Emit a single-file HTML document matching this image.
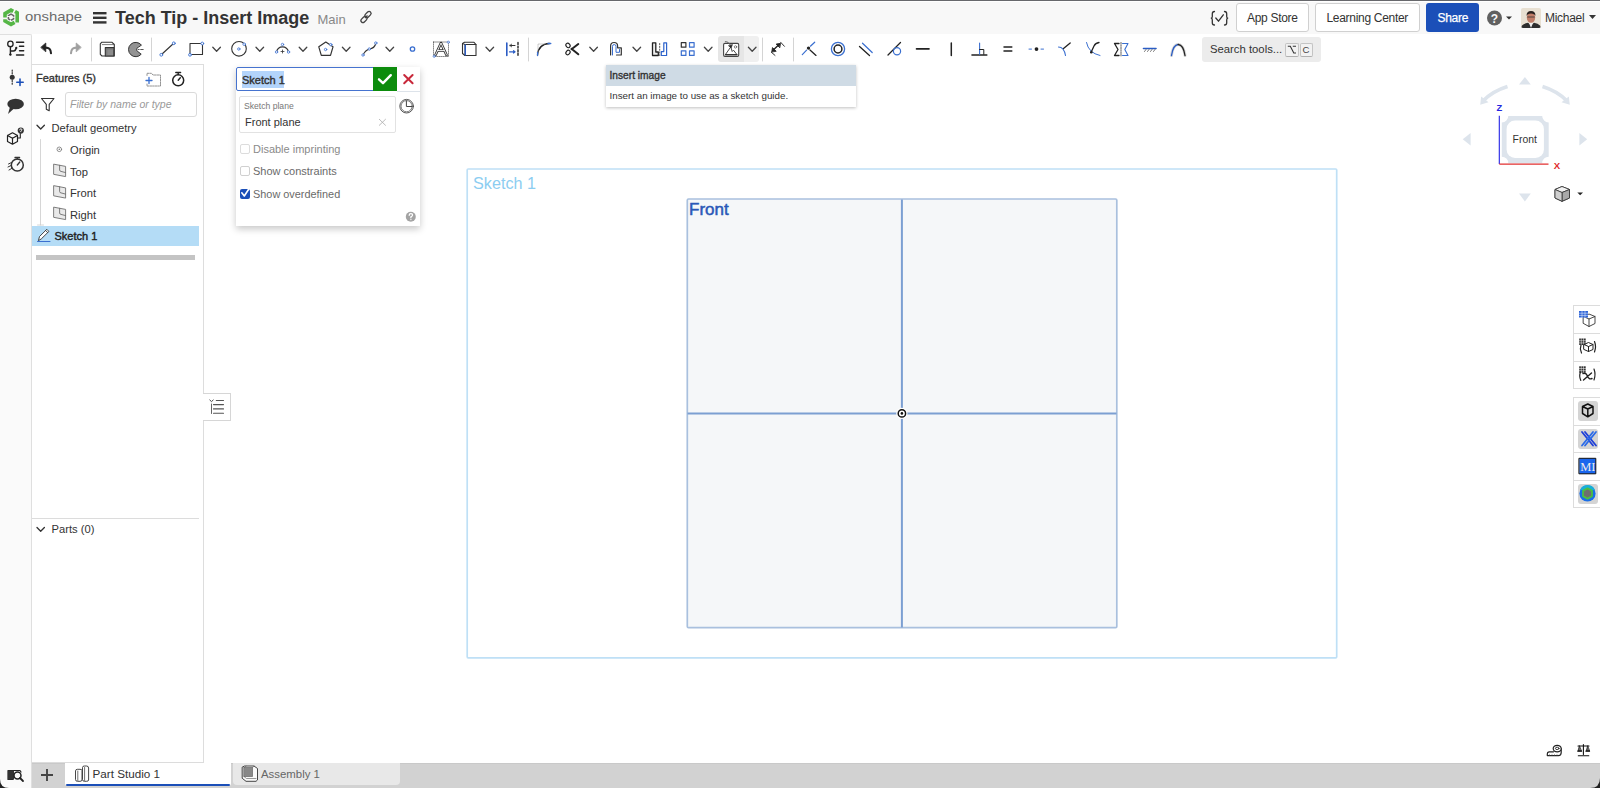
<!DOCTYPE html>
<html><head><meta charset="utf-8">
<style>
*{box-sizing:border-box;margin:0;padding:0}
html,body{width:1600px;height:788px;overflow:hidden;background:#fff;font-family:"Liberation Sans",sans-serif;color:#333}
.a{position:absolute}
svg{position:absolute;overflow:visible}
.t{position:absolute;white-space:nowrap;line-height:1}
</style></head><body>
<div class="a" style="left:0;top:0;width:1600px;height:1px;background:#67686c"></div>
<div class="a" style="left:0;top:1px;width:1600px;height:33px;background:#f8f8f8;border-top:1px solid #fff"></div>
<div class="a" style="left:32px;top:34px;width:1568px;height:30px;background:#fff"></div>
<div class="a" style="left:-1px;top:34px;width:33px;height:754px;background:#fafafa;border-right:1px solid #dfdfdf;border-top:1px solid #dfdfdf;border-top-right-radius:2px"></div>
<div class="a" style="left:32px;top:64px;width:172px;height:698px;background:#fff;border-top:1px solid #ddd;border-right:1px solid #ddd"></div>
<div class="a" style="left:32px;top:763px;width:1568px;height:25px;background:#d2d2d2;border-top:1px solid #c9c9c9"></div>
<!-- HEADER CONTENT -->
<svg style="left:0;top:0" width="30" height="34" viewBox="0 0 30 34" fill="none" stroke-linejoin="miter">
  <path d="M5 17.5 V13.6 L11 10.1 L13.2 11.3" stroke="#55b646" stroke-width="3.6"/>
  <path d="M15 11.5 L17.2 12.8 V22.6" stroke="#55b646" stroke-width="3.6"/>
  <path d="M5 19.2 V21 L11 24.4 L14.6 22.4" stroke="#55b646" stroke-width="3.6"/>
  <path d="M11 14.2 L13.6 15.7 V18.8 L11 20.3 L8.4 18.8 V15.7 Z" stroke="#666" stroke-width="1.5" stroke-dasharray="4 1"/>
</svg>
<div class="t" style="left:25px;top:11.4px;font-size:12.6px;color:#6a6a6a;transform:scaleX(1.18);transform-origin:0 0">onshape</div>
<svg style="left:93px;top:12px" width="14" height="12" viewBox="0 0 14 12">
  <rect x="0" y="0" width="13.5" height="2.4" fill="#333"/>
  <rect x="0" y="4.6" width="13.5" height="2.4" fill="#333"/>
  <rect x="0" y="9.2" width="13.5" height="2.4" fill="#333"/>
</svg>
<div class="t" style="left:115px;top:9px;font-size:18px;font-weight:bold;color:#333;letter-spacing:0px">Tech Tip - Insert Image</div>
<div class="t" style="left:317.5px;top:13px;font-size:13px;color:#888">Main</div>
<svg style="left:359px;top:10px" width="14" height="14" viewBox="0 0 14 14">
  <path d="M6 8 L8.5 5.5" stroke="#444" stroke-width="1.3"/>
  <rect x="7" y="1" width="4" height="7" rx="2" transform="rotate(45 9 4.5)" fill="none" stroke="#444" stroke-width="1.3"/>
  <rect x="3" y="6" width="4" height="7" rx="2" transform="rotate(45 5 9.5)" fill="none" stroke="#444" stroke-width="1.3"/>
</svg>

<!-- right header -->
<svg style="left:0;top:0" width="1240" height="34" viewBox="0 0 1240 34" fill="none" stroke-linecap="round" stroke-linejoin="round">
 <path d="M1214.5 11.5 Q1212.3 11.5 1212.3 13.8 V16.5 Q1212.3 18 1211.3 18.2 Q1212.3 18.5 1212.3 20 V22.7 Q1212.3 25 1214.5 25" stroke="#333" stroke-width="1.3"/>
 <path d="M1224.5 11.5 Q1226.7 11.5 1226.7 13.8 V16.5 Q1226.7 18 1227.7 18.2 Q1226.7 18.5 1226.7 20 V22.7 Q1226.7 25 1224.5 25" stroke="#333" stroke-width="1.3"/>
 <path d="M1215.8 18 L1218.5 21.2 L1223.3 14.8" stroke="#333" stroke-width="1.3"/>
</svg>
<div class="a" style="left:1236px;top:3px;width:73px;height:29px;border:1px solid #d0d0d0;border-radius:3px;background:#fff"></div>
<div class="t" style="left:1247px;top:11.6px;font-size:12px;letter-spacing:-0.3px;color:#333">App Store</div>
<div class="a" style="left:1315px;top:3px;width:105px;height:29px;border:1px solid #d0d0d0;border-radius:3px;background:#fff"></div>
<div class="t" style="left:1326.5px;top:11.6px;font-size:12px;letter-spacing:-0.3px;color:#333">Learning Center</div>
<div class="a" style="left:1426px;top:3px;width:53px;height:29px;border-radius:3px;background:#1b4fb8"></div>
<div class="t" style="left:1437.5px;top:11.6px;font-size:12px;letter-spacing:-0.3px;-webkit-text-stroke:0.25px #fff;color:#fff">Share</div>
<svg style="left:1487px;top:10px" width="26" height="16" viewBox="0 0 26 16">
  <circle cx="7.5" cy="8" r="7.5" fill="#606060"/>
  <text x="7.5" y="12.5" text-anchor="middle" font-family="Liberation Sans" font-weight="bold" font-size="12" fill="#f8f8f8">?</text>
  <path d="M19 6.5 L25 6.5 L22 9.5 Z" fill="#333"/>
</svg>
<svg style="left:1521px;top:8px" width="20" height="20" viewBox="0 0 20 20">
 <defs><clipPath id="av"><rect x="0" y="0" width="20" height="20" rx="2"/></clipPath></defs>
 <g clip-path="url(#av)">
  <rect width="20" height="20" fill="#e8e0d2"/>
  <path d="M0 20 L1 17.5 Q3 15.5 7 14.8 L10 17 L13 14.8 Q17 15.5 19 17.5 L20 20 Z" fill="#2e2e2e"/>
  <path d="M8 15 L10 20 L12 15 Z" fill="#eee"/>
  <ellipse cx="10" cy="9.5" rx="4.2" ry="5.3" fill="#c07d68"/>
  <path d="M5.5 8 Q5.5 3 10 3 Q14.5 3 14.5 8 Q13.5 5.5 10 5.5 Q6.5 5.5 5.5 8 Z" fill="#2a2220"/>
  <path d="M6.3 9 H13.7" stroke="#333" stroke-width="0.8"/>
 </g>
</svg>
<div class="t" style="left:1545px;top:11.6px;font-size:12px;letter-spacing:-0.3px;color:#333">Michael</div>
<svg style="left:1589px;top:15px" width="7" height="4" viewBox="0 0 7 4"><path d="M0 0 L7 0 L3.5 4 Z" fill="#333"/></svg>

<!-- TOOLBAR -->
<div class="a" style="left:718px;top:36px;width:25.7px;height:26px;background:#e6e6e6;border-radius:3px 0 0 3px"></div>
<div class="a" style="left:743.7px;top:36px;width:15.5px;height:26px;background:#f0f0f0;border-radius:0 3px 3px 0"></div>
<svg style="left:0;top:0" width="1600" height="64" viewBox="0 0 1600 64" fill="none" stroke-linecap="round" stroke-linejoin="round">
 <g stroke="#d4d4d4" stroke-width="1">
  <path d="M91.5 38 V61 M151.5 38 V61 M528.5 38 V61 M762.5 38 V61 M793.5 38 V61"/>
 </g>
 <!-- undo -->
 <path d="M41 47.2 L45.8 43 V51.4 Z" fill="#222" stroke="#222" stroke-width="0.8"/><path d="M45 47.6 Q50.8 47.2 51 53.3" stroke="#222" stroke-width="2.1"/>
 <!-- redo -->
 <path d="M81 47.2 L76.2 43 V51.4 Z" fill="#a0a0a0" stroke="#a0a0a0" stroke-width="0.8"/><path d="M77 47.6 Q71.2 47.2 71 53.3" stroke="#a0a0a0" stroke-width="2.1"/>
 <!-- layers (new sketch) -->
 <path d="M100.3 43.8 L101.8 42.2 H111.8 L114.3 44.5 V56 H102 L100.3 54.3 Z" fill="#fff" stroke="#333" stroke-width="1.1"/>
 <path d="M102.3 44.6 H113.5" stroke="#444" stroke-width="0.7"/>
 <path d="M105.3 47.6 H113.8 V56 H105.3 Z" fill="#8c8c8c" stroke="#333" stroke-width="1.1"/>
 <path d="M106.8 49 H113.8 M106.8 49 V56" stroke="#666" stroke-width="0.6"/>
 <!-- use -->
 <path d="M141.2 44.8 A7.2 7.2 0 1 0 141.2 54.2 L137.8 51.5 A2.2 2.2 0 0 1 137.8 47.5 Z" fill="#939393" stroke="#333" stroke-width="1"/>
 <path d="M138 49.5 H139.2 M140.7 49.5 H143.2" stroke="#444" stroke-width="0.9"/>
 <!-- line -->
 <path d="M161.5 54.5 L173.5 43.5" stroke="#333" stroke-width="1.1"/>
 <circle cx="161.3" cy="54.8" r="1.4" stroke="#3a6fd0" stroke-width="0.9" fill="#fff"/>
 <circle cx="173.8" cy="43.3" r="1.4" stroke="#3a6fd0" stroke-width="0.9" fill="#fff"/>
 <!-- rect -->
 <rect x="190" y="43.5" width="12.5" height="11" stroke="#333" stroke-width="1.1"/>
 <circle cx="202.3" cy="43.5" r="1.4" stroke="#3a6fd0" stroke-width="0.9" fill="#fff"/>
 <circle cx="190" cy="54.8" r="1.4" stroke="#3a6fd0" stroke-width="0.9" fill="#fff"/>
 <!-- carets -->
 <g stroke="#444" stroke-width="1.3">
  <path d="M212.8 47.3 L216.6 51.2 L220.4 47.3"/>
  <path d="M256 47.3 L259.8 51.2 L263.6 47.3"/>
  <path d="M299.2 47.3 L303 51.2 L306.8 47.3"/>
  <path d="M342.4 47.3 L346.2 51.2 L350 47.3"/>
  <path d="M386 47.3 L389.8 51.2 L393.6 47.3"/>
  <path d="M486 47.3 L489.8 51.2 L493.6 47.3"/>
  <path d="M589.8 47.3 L593.6 51.2 L597.4 47.3"/>
  <path d="M633 47.3 L636.8 51.2 L640.6 47.3"/>
  <path d="M704.4 47.3 L708.2 51.2 L712 47.3"/>
  <path d="M748.4 47.3 L752.2 51.2 L756 47.3"/>
 </g>
 <!-- circle -->
 <circle cx="239" cy="48.8" r="7.3" stroke="#333" stroke-width="1.1"/>
 <circle cx="238.8" cy="49" r="1.2" stroke="#3a6fd0" stroke-width="0.8"/>
 <circle cx="244.2" cy="44.2" r="1.3" stroke="#3a6fd0" stroke-width="0.8" fill="#fff"/>
 <!-- arc -->
 <path d="M276.5 52 A6.2 6.8 0 0 1 288.5 52" stroke="#333" stroke-width="1.1"/>
 <circle cx="282.5" cy="44.5" r="1.2" stroke="#3a6fd0" stroke-width="0.8" fill="#fff"/>
 <circle cx="276.5" cy="52" r="1.2" stroke="#3a6fd0" stroke-width="0.8" fill="#fff"/>
 <circle cx="288.5" cy="52" r="1.2" stroke="#3a6fd0" stroke-width="0.8" fill="#fff"/>
 <path d="M281 51.5 H284 M282.5 50 V53" stroke="#333" stroke-width="0.8"/>
 <!-- polygon -->
 <path d="M325.8 42 L333 46.8 L330.5 55.3 L321.3 55.3 L318.8 46.8 Z" stroke="#333" stroke-width="1.2"/>
 <circle cx="325.6" cy="49.5" r="1.2" stroke="#3a6fd0" stroke-width="0.8"/>
 <circle cx="330.8" cy="44.6" r="1.2" stroke="#3a6fd0" stroke-width="0.8" fill="#fff"/>
 <!-- spline -->
 <path d="M363 55 Q365 50.5 369.3 49 Q374.5 48.5 375.8 43.5" stroke="#333" stroke-width="1.1"/>
 <circle cx="363" cy="55" r="1.2" stroke="#3a6fd0" stroke-width="0.8" fill="#fff"/>
 <circle cx="369.3" cy="49" r="1.2" stroke="#3a6fd0" stroke-width="0.8" fill="#fff"/>
 <circle cx="375.8" cy="43" r="1.2" stroke="#3a6fd0" stroke-width="0.8" fill="#fff"/>
 <!-- point -->
 <circle cx="412.5" cy="49" r="2.2" stroke="#3a6fd0" stroke-width="1.3"/>
 <!-- text -->
 <rect x="433.5" y="42" width="15" height="14.5" stroke="#555" stroke-width="0.7" stroke-dasharray="1 1"/>
 <path d="M435.5 55 L441 43 L446.5 55 M437.8 50.5 H444.2" stroke="#333" stroke-width="2.6"/>
 <path d="M435.5 55 L441 43 L446.5 55 M437.8 50.5 H444.2" stroke="#fff" stroke-width="0.9"/>
 <circle cx="448.3" cy="42.2" r="1.1" stroke="#3a6fd0" stroke-width="0.7" fill="#fff"/>
 <circle cx="434.2" cy="56.3" r="1.1" stroke="#3a6fd0" stroke-width="0.7" fill="#fff"/>
 <!-- offset -->
 <path d="M462.5 43.5 L464.5 42.3 H474 L476 44.5 V55.5 H465 L462.5 53.5 Z" stroke="#333" stroke-width="1.1" fill="#fff"/>
 <path d="M462.5 43.5 L465 44.5 H476 M465 44.5 V55.5" stroke="#333" stroke-width="1"/>
 <path d="M465.3 45 V55" stroke="#2a5cc4" stroke-width="1.4"/>
 <!-- mirror -->
 <path d="M506.8 43 V55.5" stroke="#2a5cc4" stroke-width="1.6"/>
 <path d="M518 42.5 V56" stroke="#222" stroke-width="1.4" stroke-dasharray="2 1.6"/>
 <path d="M510 45.5 H515 M510 45.5 L511.5 44.3 M510 45.5 L511.5 46.7" stroke="#333" stroke-width="1"/>
 <path d="M509.5 51.8 H515 M515 51.8 L513.5 50.6 M515 51.8 L513.5 53" stroke="#2a5cc4" stroke-width="1.2"/>
 <!-- fillet -->
 <path d="M537.5 55 Q538.5 44 549.5 43.5" stroke="#222" stroke-width="1.3"/>
 <path d="M537.6 52.5 V55.5" stroke="#3a6fd0" stroke-width="1.3"/>
 <path d="M548 43.5 H550.8" stroke="#3a6fd0" stroke-width="1.3"/>
 <path d="M538 51 V44 H545" stroke="#999" stroke-width="0.5" stroke-dasharray="0.8 0.8"/>
 <!-- trim (scissors) -->
 <path d="M571.5 49.2 L578.3 44 M571.5 48.8 L578.3 54.3" stroke="#222" stroke-width="2"/>
 <ellipse cx="568" cy="45.4" rx="1.9" ry="2.4" transform="rotate(-40 568 45.4)" stroke="#222" stroke-width="1.1"/>
 <ellipse cx="568" cy="52.5" rx="1.9" ry="2.4" transform="rotate(40 568 52.5)" stroke="#222" stroke-width="1.1"/>
 <!-- extend icon -->
 <path d="M610.6 55 V46 A3.5 3.5 0 0 1 617.6 46 V47.8 H621.3 V55 H616.5" stroke="#333" stroke-width="1.2"/>
 <path d="M612.5 55 V46.3 A1.75 1.75 0 0 1 616 46.3 V52.3 H619.5 V49.5" stroke="#3a6fd0" stroke-width="1"/>
 <!-- split -->
 <path d="M652.5 55.5 V42.8 H655.8 V52 H658.3 V55.5 Z" stroke="#222" stroke-width="1.3" fill="#eee"/>
 <path d="M663.8 42.8 H666.6 V55.5 H661.3 V51.6 H663.8 Z" stroke="#2d63cc" stroke-width="1.2"/>
 <path d="M659.7 43.5 V55.5" stroke="#444" stroke-width="0.9" stroke-dasharray="1.2 1.6"/>
 <!-- pattern -->
 <rect x="681.3" y="42.6" width="4.6" height="4.6" stroke="#333" stroke-width="1.2"/>
 <rect x="689.5" y="42.6" width="4.6" height="4.6" stroke="#3a6fd0" stroke-width="1.2"/>
 <rect x="681.3" y="50.8" width="4.6" height="4.6" stroke="#3a6fd0" stroke-width="1.2"/>
 <rect x="689.5" y="50.8" width="4.6" height="4.6" stroke="#3a6fd0" stroke-width="1.2"/>
 <!-- insert image -->
 <rect x="723.6" y="43.4" width="15.1" height="13" rx="1.3" stroke="#444" stroke-width="1.1" fill="#fff"/>
 <path d="M725.5 54.4 L730.8 46.9 L732.2 51.5 L733.5 50.2 L736.8 54.4 Z" stroke="#333" stroke-width="0.9"/>
 <path d="M725.5 54.6 H736.9" stroke="#333" stroke-width="1.2"/>
 <circle cx="735.5" cy="46.9" r="1.2" stroke="#555" stroke-width="0.7"/>
 <path d="M725.3 41.6 Q729 41.3 730.6 46" stroke="#666" stroke-width="1"/>
 <path d="M728.8 45.9 L731.1 47.8 L732.3 44.9 Z" fill="#222" stroke="#222" stroke-width="0.7"/>
 <!-- dimension -->
 <path d="M773.8 49.6 L778.3 45.3" stroke="#222" stroke-width="1.4"/>
 <path d="M771.8 51.7 L772.5 47.6 L775.9 51 Z M780.2 43.4 L776.2 44.1 L779.5 47.5 Z" fill="#222" stroke="#222" stroke-width="0.9"/>
 <path d="M780.6 42.2 L784.4 46.3 M771.3 52.2 L775 55.4" stroke="#333" stroke-width="1"/>
 <!-- coincident -->
 <path d="M802.3 54.6 L806.6 50.2 M810.4 46.2 L814.7 42.2" stroke="#3a6fd0" stroke-width="1.2"/>
 <path d="M810 50 L816 55.4" stroke="#222" stroke-width="1.3"/>
 <circle cx="808.5" cy="48.1" r="1.7" fill="#222" stroke="none"/>
 <!-- concentric -->
 <circle cx="838" cy="49" r="6.6" stroke="#3a6fd0" stroke-width="1.3"/>
 <circle cx="838" cy="49" r="3.9" stroke="#222" stroke-width="1.5"/>
 <!-- parallel -->
 <path d="M859.5 46.5 L869.5 55.5" stroke="#222" stroke-width="1.3"/>
 <path d="M862.5 43.2 L872.2 52.5" stroke="#3a6fd0" stroke-width="1.2"/>
 <!-- tangent -->
 <path d="M888 55 L900.5 42.5" stroke="#222" stroke-width="1.3"/>
 <circle cx="897" cy="51.3" r="3.6" stroke="#3a6fd0" stroke-width="1.2"/>
 <!-- horizontal -->
 <path d="M916.5 48.9 H929" stroke="#222" stroke-width="1.6"/>
 <!-- vertical -->
 <path d="M951.3 43 V55.5" stroke="#222" stroke-width="1.5"/>
 <!-- perpendicular -->
 <path d="M972 55 H986.8" stroke="#222" stroke-width="1.6"/>
 <path d="M979.6 43 V54.3" stroke="#3a6fd0" stroke-width="1.1"/>
 <path d="M979.6 49.5 H983.8 V54.3" stroke="#222" stroke-width="1"/>
 <!-- equal -->
 <path d="M1004 47 H1011.8 M1004 51 H1011.8" stroke="#222" stroke-width="1.5"/>
 <!-- midpoint -->
 <path d="M1029 49.1 H1031.5 M1041 49.1 H1043.5" stroke="#3a6fd0" stroke-width="1"/>
 <circle cx="1036.5" cy="49.1" r="1.9" fill="#222" stroke="none"/>
 <!-- normal -->
 <path d="M1058.5 47 Q1064 47 1065.5 55.5" stroke="#3a6fd0" stroke-width="1.1"/>
 <path d="M1063.5 48.5 L1070.2 43" stroke="#222" stroke-width="1.3"/>
 <!-- pierce -->
 <path d="M1086.5 42.5 Q1088.5 53 1100 55.5" stroke="#3a6fd0" stroke-width="1"/>
 <path d="M1091 52.5 L1094 46 Q1095.5 43 1099 42.5" stroke="#222" stroke-width="1.3"/>
 <circle cx="1091.3" cy="52.3" r="1.3" fill="#222" stroke="none"/>
 <!-- symmetric -->
 <path d="M1119 43.5 H1114.5 L1118 49.5 L1114.5 55.5 H1119" stroke="#222" stroke-width="1.3"/>
 <path d="M1122.5 43.5 H1128 L1124.8 49.5 L1128 55.5 H1122.5" stroke="#3a6fd0" stroke-width="1.1"/>
 <path d="M1121 42.5 V56" stroke="#333" stroke-width="0.8" stroke-dasharray="1.4 1"/>
 <!-- fix -->
 <path d="M1143.5 48.5 H1156" stroke="#2a5cc4" stroke-width="1.6"/>
 <path d="M1144.5 51.5 L1146 49.5 M1147.5 51.5 L1149 49.5 M1150.5 51.5 L1152 49.5 M1153.5 51.5 L1155 49.5" stroke="#444" stroke-width="0.7"/>
 <!-- curvature -->
 <path d="M1171.5 55.5 Q1173 45 1178.2 44.5 Q1183.5 45 1185 55.5" stroke="#d8d8d8" stroke-width="3" stroke-dasharray="0.6 0.9"/>
 <path d="M1171.5 55.5 Q1173 45 1178.2 44.5" stroke="#2a5cc4" stroke-width="1.3"/>
 <path d="M1178.2 44.5 Q1183.5 45 1185 55.5" stroke="#222" stroke-width="1.3"/>
</svg>
<!-- search tools -->
<div class="a" style="left:1201.5px;top:37px;width:119.5px;height:25px;background:#ececec;border-radius:3px"></div>
<div class="t" style="left:1210px;top:44px;font-size:11.3px;color:#333">Search tools...</div>
<div class="a" style="left:1285px;top:42.5px;width:13.5px;height:14px;border:1px solid #c4c4c4;border-bottom:1.5px solid #b0b0b0;border-radius:2px;background:#f2f2f2"></div>
<div class="a" style="left:1299.5px;top:42.5px;width:13.5px;height:14px;border:1px solid #c4c4c4;border-bottom:1.5px solid #b0b0b0;border-radius:2px;background:#f2f2f2"></div>
<svg style="left:0;top:0" width="1320" height="64" viewBox="0 0 1320 64" fill="none">
 <path d="M1287.8 46.3 H1290.3 L1293.8 53 H1296 M1292.8 46.3 H1296" stroke="#333" stroke-width="1.1"/>
</svg>
<div class="t" style="left:1302.6px;top:45.3px;font-size:9.6px;color:#444">C</div>

<!-- LEFT COLUMN ICONS -->
<svg style="left:0;top:0" width="32" height="788" viewBox="0 0 32 788" fill="none" stroke-linecap="round" stroke-linejoin="round">
 <!-- feature tree -->
 <circle cx="10.4" cy="43.9" r="2.7" stroke="#222" stroke-width="1.3"/>
 <path d="M10.4 46.6 V54.5 M10.4 51 H13.5 Q15.6 51 16.2 48" stroke="#222" stroke-width="1.4"/>
 <circle cx="10.4" cy="54.6" r="1.2" fill="#222"/>
 <circle cx="16.3" cy="47.9" r="1.1" fill="#222"/>
 <path d="M16.5 42.3 H23.7 M19.5 46.3 H23.7 M19.5 50.7 H23.7 M16.5 55 H23.7" stroke="#222" stroke-width="1.4"/>
 <!-- add feature -->
 <path d="M12.2 70 V84.5" stroke="#222" stroke-width="1.1" stroke-dasharray="1.2 1.4"/>
 <circle cx="12.2" cy="77.3" r="2.5" fill="#333"/>
 <path d="M16.8 82.2 H23.2 M20 79 V85.4" stroke="#1b4fb8" stroke-width="1.6"/>
 <!-- comment -->
 <ellipse cx="15.6" cy="104" rx="8.3" ry="5.2" fill="#333"/>
 <path d="M10 107 L8 114 L14 108.5 Z" fill="#333"/>
 <!-- cube ? -->
 <path d="M7.5 135.5 L12.5 132.8 L17.5 135.5 V141.5 L12.5 144.2 L7.5 141.5 Z M7.5 135.5 L12.5 138.2 L17.5 135.5 M12.5 138.2 V144.2" stroke="#222" stroke-width="1.2"/>
 <path d="M17.5 138 H20.3 V133.5" stroke="#222" stroke-width="1.1"/>
 <circle cx="20.8" cy="130.6" r="3.1" fill="#333"/>
 <path d="M19.7 129.9 Q19.7 128.8 20.8 128.8 Q22 128.8 21.9 129.9 Q21.8 130.7 20.8 131.1 V131.7" stroke="#fff" stroke-width="0.9"/>
 <!-- stopwatch -->
 <circle cx="17.3" cy="165" r="6" stroke="#333" stroke-width="1.5"/>
 <path d="M15 157.5 H19.6 M17.3 157.5 V159 M17.3 165 L19.8 162" stroke="#333" stroke-width="1.3"/>
 <path d="M8.5 164 L11.5 162.5 M8 167 L11.5 165.3 M9 170 L12 168.3" stroke="#333" stroke-width="1"/>
 <!-- bottom search view -->
 <path d="M8 770.5 H20 L21 772 M8 770.5 V779.5 H13" stroke="#222" stroke-width="1.2"/>
 <rect x="8" y="770.5" width="6" height="9" fill="#333"/>
 <circle cx="17.5" cy="775.5" r="3.5" stroke="#222" stroke-width="1.5" fill="#f9f9f9"/>
 <path d="M20 778 L23 781" stroke="#222" stroke-width="1.8"/>
</svg>

<!-- FEATURES PANEL CONTENT -->
<div class="t" style="left:36px;top:73px;font-size:11px;-webkit-text-stroke:0.35px #333;color:#333">Features (5)</div>
<svg style="left:0;top:0" width="204" height="560" viewBox="0 0 204 560" fill="none" stroke-linecap="round" stroke-linejoin="round">
 <!-- add folder -->
 <path d="M147 75.5 V73.3 H151.5 L153 75 H160.5 V86 H147 V84" stroke="#888" stroke-width="0.9" stroke-dasharray="1.6 1"/>
 <path d="M146 80.5 H152 M149 77.5 V83.5" stroke="#3a6fd0" stroke-width="1.3"/>
 <!-- stopwatch -->
 <circle cx="178.2" cy="80.3" r="5.5" stroke="#222" stroke-width="1.5"/>
 <path d="M175.8 72.5 H180.6 M178.2 72.5 V74.5 M178.2 80.3 L180.3 77.8" stroke="#222" stroke-width="1.4"/>
 <!-- filter -->
 <path d="M41.5 98.5 H54 L49.2 104.3 V110.8 L46.3 109.2 V104.3 Z" stroke="#333" stroke-width="1.1"/>
 <!-- chevrons -->
 <path d="M37 125.2 L40.7 129 L44.4 125.2" stroke="#333" stroke-width="1.3"/>
 <path d="M37 527.5 L40.7 531.3 L44.4 527.5" stroke="#333" stroke-width="1.3"/>
 <!-- tree line -->
 <path d="M40.5 139.5 V225" stroke="#ccc" stroke-width="0.8"/>
 <path d="M37.5 225 H43.5" stroke="#ccc" stroke-width="0.8"/>
 <!-- origin -->
 <circle cx="59.3" cy="149.3" r="2.3" stroke="#777" stroke-width="0.8"/>
 <circle cx="59.3" cy="149.3" r="0.8" fill="#777"/>
 <!-- planes -->
 <g stroke="#6f6f6f" stroke-width="0.9" fill="#e9e9e9">
  <path d="M54 164.2 L65.6 166.39999999999998 V176.6 L54 174.39999999999998 Z"/>
  <path d="M59.6 165.29999999999998 V170.0 Q59.6 171.2 61 171.39999999999998 L65.6 172.6" fill="none"/>
  <path d="M54 185.7 L65.6 187.89999999999998 V198.1 L54 195.89999999999998 Z"/>
  <path d="M59.6 186.79999999999998 V191.5 Q59.6 192.7 61 192.89999999999998 L65.6 194.1" fill="none"/>
  <path d="M54 207.2 L65.6 209.39999999999998 V219.6 L54 217.39999999999998 Z"/>
  <path d="M59.6 208.29999999999998 V213.0 Q59.6 214.2 61 214.39999999999998 L65.6 215.6" fill="none"/>
 </g>
</svg>
<div class="a" style="left:65px;top:92px;width:132px;height:25px;border:1px solid #dadada;border-radius:3px;background:#fff"></div>
<div class="t" style="left:70px;top:99px;font-size:10.5px;font-style:italic;color:#9a9a9a">Filter by name or type</div>
<div class="t" style="left:51.5px;top:123px;font-size:11.2px;color:#333">Default geometry</div>
<div class="t" style="left:70px;top:144.6px;font-size:11.2px;color:#333">Origin</div>
<div class="t" style="left:70px;top:166.6px;font-size:11.2px;color:#333">Top</div>
<div class="t" style="left:70px;top:187.6px;font-size:11.2px;color:#333">Front</div>
<div class="t" style="left:70px;top:209.6px;font-size:11.2px;color:#333">Right</div>
<div class="a" style="left:32px;top:226px;width:167px;height:20px;background:#b4dcf6"></div>
<svg style="left:0;top:0" width="204" height="260" viewBox="0 0 204 260" fill="none" stroke-linecap="round" stroke-linejoin="round">
 <path d="M38.5 240.3 L39.5 236.5 L46.8 229.3 L48.9 231.4 L41.6 238.6 Z M45.6 230.5 L47.7 232.6" stroke="#333" stroke-width="0.9" fill="#fff"/>
 <path d="M37.5 241.5 H50" stroke="#3a6fd0" stroke-width="1"/>
</svg>
<div class="t" style="left:54.5px;top:231px;font-size:11px;-webkit-text-stroke:0.4px #222;color:#222">Sketch 1</div>
<div class="a" style="left:36px;top:254.5px;width:159px;height:5.5px;background:#c4c4c4"></div>
<div class="a" style="left:32px;top:518px;width:167px;height:1px;background:#dcdcdc"></div>
<div class="t" style="left:51.5px;top:524px;font-size:11.2px;color:#333">Parts (0)</div>

<!-- panel collapse tab -->
<div class="a" style="left:203px;top:393px;width:28px;height:28px;background:#fff;border:1px solid #d6d6d6;border-left:none"></div>
<div class="a" style="left:203px;top:394px;width:2px;height:26px;background:#fff"></div>
<svg style="left:0;top:0" width="240" height="430" viewBox="0 0 240 430" fill="none" stroke-linecap="round">
 <path d="M209.8 400 L211.5 401.6 L213.2 400" stroke="#333" stroke-width="0.9"/>
 <path d="M211.5 404 V413.5" stroke="#555" stroke-width="0.9"/>
 <path d="M216.3 400.5 H223.5 M213.5 404.6 H223.5 M213.5 408.9 H223.5 M213.5 413.2 H223.5" stroke="#555" stroke-width="1.1"/>
</svg>

<!-- FEATURE DIALOG -->
<div class="a" style="left:236px;top:67px;width:184px;height:159px;background:#fff;box-shadow:0 3px 7px rgba(0,0,0,0.22)"></div>
<div class="a" style="left:236px;top:67px;width:137.5px;height:24px;border:1.6px solid #4673cf;border-radius:2px 0 0 2px;background:#fff"></div>
<div class="a" style="left:242px;top:71px;width:42px;height:17px;background:#b3d4fb"></div>
<div class="t" style="left:242px;top:74.5px;font-size:11px;-webkit-text-stroke:0.4px #333;color:#333">Sketch 1</div>
<div class="a" style="left:373px;top:67px;width:24px;height:24px;background:#0c8c0c"></div>
<svg style="left:0;top:0" width="430" height="230" viewBox="0 0 430 230" fill="none" stroke-linecap="round" stroke-linejoin="round">
 <path d="M379 79.3 L383 83.2 L390.8 75.2" stroke="#fff" stroke-width="2.4"/>
 <path d="M404.2 75 L412.6 83.3 M412.6 75 L404.2 83.3" stroke="#c8283a" stroke-width="2"/>
 <circle cx="406.6" cy="106.2" r="6.8" stroke="#444" stroke-width="0.9"/>
 <circle cx="406.6" cy="106.2" r="5.6" stroke="#444" stroke-width="0.7"/>
 <path d="M406.4 100.8 V106.5 H411.8" stroke="#444" stroke-width="1"/>
 <path d="M379.3 119.3 L385.5 125.3 M385.5 119.3 L379.3 125.3" stroke="#aaa" stroke-width="0.8"/>
 <circle cx="410.8" cy="216.8" r="5" fill="#a3a3a3" stroke="none"/>
 <path d="M409.2 215.3 Q409.2 213.6 410.9 213.6 Q412.6 213.6 412.6 215.1 Q412.6 216.2 410.9 216.9 V217.8" stroke="#fff" stroke-width="1.3"/>
 <circle cx="410.9" cy="219.6" r="0.7" fill="#fff" stroke="none"/>
 <path d="M242 192.5 L244.5 195.5 L249.5 188" stroke="#fff" stroke-width="1.5"/>
</svg>
<div class="a" style="left:397px;top:91px;width:23px;height:1px;background:#dde3ea"></div>
<div class="a" style="left:239px;top:96px;width:157px;height:37px;border:1px solid #e2e2e2;border-radius:2px"></div>
<div class="t" style="left:244px;top:101.5px;font-size:8.6px;color:#777">Sketch plane</div>
<div class="t" style="left:245px;top:116.8px;font-size:11px;color:#333">Front plane</div>
<div class="a" style="left:240px;top:144px;width:10px;height:10px;border:1px solid #dcdcdc;border-radius:2px"></div>
<div class="a" style="left:240px;top:166px;width:10px;height:10px;border:1px solid #d0d0d0;border-radius:2px"></div>
<div class="a" style="left:240px;top:188.5px;width:10px;height:10px;background:#1b4fb8;border-radius:2px"></div>
<svg style="left:0;top:0" width="430" height="230" viewBox="0 0 430 230" fill="none" stroke-linecap="round" stroke-linejoin="round">
 <path d="M241.8 192.8 L244.3 196 L249.3 188.3" stroke="#fff" stroke-width="1.6"/>
</svg>
<div class="t" style="left:253px;top:143.5px;font-size:11px;color:#8a8a8a">Disable imprinting</div>
<div class="t" style="left:253px;top:166px;font-size:11px;color:#6a6a6a">Show constraints</div>
<div class="t" style="left:253px;top:189px;font-size:10.9px;color:#6a6a6a">Show overdefined</div>

<!-- TOOLTIP -->
<div class="a" style="left:606px;top:65px;width:250px;height:42px;background:#fff;box-shadow:0 1px 3px rgba(0,0,0,0.25)"></div>
<div class="a" style="left:606px;top:65px;width:250px;height:21px;background:#cfdbe5"></div>
<div class="t" style="left:609.5px;top:70.5px;font-size:10.2px;-webkit-text-stroke:0.35px #333;color:#333">Insert image</div>
<div class="t" style="left:609.5px;top:91px;font-size:9.8px;color:#333">Insert an image to use as a sketch guide.</div>

<!-- CANVAS -->
<svg style="left:0;top:0" width="1600" height="788" viewBox="0 0 1600 788" fill="none">
 <rect x="467.2" y="169" width="869.5" height="488.8" rx="1" stroke="#bfe0f6" stroke-width="1.7"/>
 <rect x="687.3" y="199" width="429.5" height="428.7" rx="1.2" fill="#f5f7f9" stroke="#a9c0de" stroke-width="1.7"/>
 <path d="M901.9 199.5 V627.5 M687.5 413.4 H1116.5" stroke="#7c9fd2" stroke-width="2"/>
 <circle cx="901.9" cy="413.4" r="5.6" fill="#fff" stroke="none"/>
 <circle cx="901.9" cy="413.4" r="3.7" fill="#fff" stroke="#111" stroke-width="1.5"/>
 <circle cx="901.9" cy="413.4" r="1.3" fill="#111" stroke="none"/>
</svg>
<div class="t" style="left:473px;top:174.5px;font-size:16.2px;color:#8ccdf1">Sketch 1</div>
<div class="t" style="left:689px;top:200.6px;font-size:17px;-webkit-text-stroke:0.5px #2a58b8;color:#2a58b8">Front</div>

<!-- VIEW CUBE -->
<svg style="left:0;top:0" width="1600" height="788" viewBox="0 0 1600 788" fill="none" stroke-linejoin="round">
 <g fill="#dde4ec" stroke="none">
  <path d="M1524.9 77.1 L1530.8 84.6 H1519 Z"/>
  <path d="M1524.9 201.4 L1530.8 193.4 H1519 Z"/>
  <path d="M1462.7 139.3 L1470.6 133 V145.5 Z"/>
  <path d="M1587.2 139.3 L1579.4 133 V145.5 Z"/>
  <path d="M1501.8 122.5 A6.5 6.5 0 0 0 1508.3 116 H1542.2 A6.5 6.5 0 0 0 1548.7 122.5 V156.7 A6.5 6.5 0 0 0 1542.2 163.2 H1508.3 A6.5 6.5 0 0 0 1501.8 156.7 Z"/>
  <path d="M1480.2 104.8 L1481.2 96.5 L1488.5 102.3 Z"/>
  <path d="M1569.8 104.8 L1568.8 96.5 L1561.5 102.3 Z"/>
 </g>
 <path d="M1507.5 86.5 Q1493 91 1483.5 100.5" stroke="#dde4ec" stroke-width="3.6"/>
 <path d="M1542.5 86.5 Q1557 91 1566.5 100.5" stroke="#dde4ec" stroke-width="3.6"/>
 <rect x="1506.6" y="120.6" width="37.3" height="37.3" rx="8.5" fill="#fff"/>
 <path d="M1499.3 115.8 V164.1" stroke="#2222e6" stroke-width="1.1"/>
 <path d="M1499.3 164.1 H1548.5" stroke="#e23030" stroke-width="1.1"/>
 <text x="1496.6" y="111.4" font-family="Liberation Sans" font-weight="bold" font-size="9.3" fill="#2424e0">Z</text>
 <text x="1553.8" y="168.8" font-family="Liberation Sans" font-weight="bold" font-size="9.6" fill="#e02a2a">X</text>
 <!-- cube icon -->
 <path d="M1555 189.5 L1562 186.5 L1569.5 189.5 V198 L1562 201.3 L1555 198 Z" fill="#b8b8b8" stroke="#333" stroke-width="0.9"/>
 <path d="M1555 189.5 L1562 192.5 L1569.5 189.5 L1562 186.5 Z" fill="#f2f2f2" stroke="#333" stroke-width="0.8"/>
 <path d="M1562 192.5 V201.3 L1569.5 198 V189.5 Z" fill="#a9a9a9" stroke="#333" stroke-width="0.8"/>
 <path d="M1555 189.5 L1562 192.5 V201.3 L1555 198 Z" fill="#cfcfcf" stroke="#333" stroke-width="0.8"/>
 <path d="M1577.3 192.4 H1583 L1580.15 195.2 Z" fill="#222"/>
</svg>
<div class="t" style="left:1512.6px;top:134.8px;font-size:10.4px;color:#333">Front</div>

<!-- RIGHT COLUMN -->
<div class="a" style="left:1573px;top:305px;width:30px;height:83.5px;border:1px solid #dcdcdc;background:#fff"></div>
<div class="a" style="left:1573px;top:333px;width:27px;height:1px;background:#dcdcdc"></div>
<div class="a" style="left:1573px;top:360.5px;width:27px;height:1px;background:#dcdcdc"></div>
<div class="a" style="left:1573px;top:397px;width:30px;height:111px;border:1px solid #dcdcdc;background:#fff"></div>
<div class="a" style="left:1573px;top:424.5px;width:27px;height:1px;background:#dcdcdc"></div>
<div class="a" style="left:1573px;top:452px;width:27px;height:1px;background:#dcdcdc"></div>
<div class="a" style="left:1573px;top:479.5px;width:27px;height:1px;background:#dcdcdc"></div>
<div class="a" style="left:1578px;top:401px;width:19.5px;height:20px;background:#d4d4d4;border-radius:3px"></div>
<div class="a" style="left:1578px;top:428.5px;width:19.5px;height:20px;background:#d4d4d4;border-radius:3px"></div>
<div class="a" style="left:1578px;top:483.5px;width:19.5px;height:20px;background:#d4d4d4;border-radius:3px"></div>
<svg style="left:0;top:0" width="1600" height="788" viewBox="0 0 1600 788" fill="none" stroke-linejoin="round" stroke-linecap="round">
 <!-- icon1: grid + cube -->
 <path d="M1583.5 316.5 L1589 314 L1595 316.5 V323.5 L1589 326.5 L1583.5 323.5 Z M1583.5 316.5 L1589 319 L1595 316.5 M1589 319 V326.5" stroke="#333" stroke-width="0.9"/>
 <rect x="1579" y="311" width="9" height="6.5" fill="#2d64d8"/>
 <path d="M1582 311 V317.5 M1585 311 V317.5 M1579 313.2 H1588 M1579 315.4 H1588" stroke="#fff" stroke-width="0.5"/>
 <!-- icon2 -->
 <rect x="1579.2" y="338.5" width="6.5" height="6.5" fill="#333"/>
 <path d="M1581.3 338.5 V345 M1583.5 338.5 V345 M1579.2 340.7 H1585.7 M1579.2 342.9 H1585.7" stroke="#fff" stroke-width="0.5"/>
 <path d="M1584 344.5 L1588.5 342.5 L1593 344.5 V349.5 L1588.5 351.5 L1584 349.5 Z M1584 344.5 L1588.5 346.5 L1593 344.5 M1588.5 346.5 V351.5" stroke="#222" stroke-width="1" fill="#fff"/>
 <path d="M1581 345 Q1579.5 349 1581.5 353 M1594.5 341.5 Q1596.5 346.5 1594.5 352" stroke="#222" stroke-width="1.2"/>
 <!-- icon3 -->
 <rect x="1579.2" y="366.3" width="6.5" height="6.5" fill="#333"/>
 <path d="M1581.3 366.3 V372.8 M1583.5 366.3 V372.8 M1579.2 368.5 H1585.7 M1579.2 370.7 H1585.7" stroke="#fff" stroke-width="0.5"/>
 <path d="M1580.5 372 Q1578.8 376 1580.8 380.5 M1594 369 Q1596 374.5 1594 380" stroke="#222" stroke-width="1.2"/>
 <path d="M1583 373.5 Q1586 372.5 1587.5 376 Q1589 380 1592 378.5 M1591.5 373 L1583.5 380" stroke="#222" stroke-width="1.4"/>
 <!-- icon4: cube outline -->
 <path d="M1582.5 406.5 L1587.8 404 L1593 406.5 V413.5 L1587.8 416.8 L1582.5 413.5 Z M1582.5 406.5 L1587.8 409 L1593 406.5 M1587.8 409 V416.8" stroke="#111" stroke-width="1.5"/>
 <!-- icon5: X -->
 <path d="M1582 432 L1593 445.5 M1585 432 L1596 445.5" stroke="#1f3fd8" stroke-width="1.8"/>
 <path d="M1593 432 L1582 445.5 M1596 432 L1585 445.5" stroke="#2a6ae8" stroke-width="1.8"/>
 <!-- icon6: MI -->
 <defs><clipPath id="mi"><rect x="1579.5" y="458.5" width="16" height="15"/></clipPath></defs>
 <rect x="1579.3" y="458.3" width="16.5" height="15.5" fill="#1a66ee" stroke="#111" stroke-width="1"/>
 <text x="1580.2" y="471" font-family="Liberation Serif" font-size="12.5" fill="#ececec" clip-path="url(#mi)">MI</text>
 <!-- icon7: circle hex -->
 <circle cx="1587.5" cy="493.5" r="8.1" fill="#1a6ee8"/>
 <path d="M1580 490 A8.1 8.1 0 0 1 1595 490 Z" fill="#18aed8"/>
 <path d="M1587.5 488.3 L1592 490.9 V496.1 L1587.5 498.7 L1583 496.1 V490.9 Z" fill="#6e6e6e" stroke="#4cc040" stroke-width="1.8"/>
</svg>

<!-- BOTTOM -->
<div class="a" style="left:32px;top:762px;width:172px;height:1px;background:#dcdcdc"></div>
<div class="a" style="left:65px;top:763px;width:166px;height:23px;background:#fff;border-radius:0 0 3px 3px"></div>
<div class="a" style="left:66px;top:784px;width:164px;height:2px;background:#1b4fb8;border-radius:1px"></div>
<div class="a" style="left:232.5px;top:763px;width:167.5px;height:22px;background:#e8e8e8;border-radius:0 0 4px 4px"></div>
<div class="t" style="left:92.5px;top:768.3px;font-size:11.7px;color:#333">Part Studio 1</div>
<div class="t" style="left:261px;top:768.5px;font-size:11.4px;color:#666">Assembly 1</div>
<svg style="left:0;top:0" width="1600" height="788" viewBox="0 0 1600 788" fill="none" stroke-linejoin="round" stroke-linecap="round">
 <path d="M41 775 H53 M47 769 V781" stroke="#444" stroke-width="1.9" stroke-linecap="butt"/>
 <!-- part studio icon -->
 <path d="M75.5 770.5 Q75.5 769.3 77.5 769.3 H80 Q82 769.3 82 770.5 V780 Q82 781.3 80 781.3 H77.5 Q75.5 781.3 75.5 780 Z" stroke="#333" stroke-width="0.9" fill="#fff"/>
 <path d="M77.8 771 V780.5" stroke="#333" stroke-width="0.7"/>
 <path d="M82.5 767 Q82.5 766 84.5 766 H86.5 Q88.6 766 88.6 768 V780 Q88.6 781.3 86.5 781.3 H84.5 Q82.5 781.3 82.5 780 Z" stroke="#333" stroke-width="0.9" fill="#fff"/>
 <path d="M84.6 767.5 V780.5" stroke="#333" stroke-width="0.7"/>
 <!-- assembly icon -->
 <path d="M242.5 767 L244.5 766 H254 L257.5 768.5 V780 L256 781.3 H246 L242.5 778.5 Z" stroke="#444" stroke-width="1" fill="#fafafa"/>
 <rect x="244" y="767.5" width="8.5" height="9" fill="#888" stroke="#555" stroke-width="0.6"/>
 <path d="M244 767.5 L246 766.3 M252.5 767.5 L254 766.2 M244 776.5 L246.5 778.5 H256" stroke="#555" stroke-width="0.6"/>
 <!-- tape measure -->
 <path d="M1553.5 751.8 H1549 Q1547.3 752 1547.3 754 V755.6 H1558.5 Q1561.2 755.6 1561.2 752.5 V748.5" stroke="#222" stroke-width="1.2" fill="#fff"/>
 <path d="M1549.5 755.2 V754.3 M1552 755.2 V754.3 M1554.5 755.2 V754.3 M1557 755.2 V754.3" stroke="#666" stroke-width="0.5"/>
 <ellipse cx="1557.2" cy="748.6" rx="4" ry="3.3" stroke="#222" stroke-width="1.2" fill="#fff"/>
 <ellipse cx="1557.2" cy="748.4" rx="1.8" ry="1.2" stroke="#222" stroke-width="0.9"/>
 <!-- balance -->
 <path d="M1578 746 H1589 M1583.4 744.5 V754.5 M1578.3 755.7 H1588.8" stroke="#111" stroke-width="1.1"/>
 <path d="M1579.3 746 L1578 751 H1581.2 Z M1587.6 746 L1586.2 751 H1589.3 Z" stroke="#111" stroke-width="0.7" fill="#666"/>
 <path d="M1577.8 751.2 H1581.5 M1586 751.2 H1589.5" stroke="#111" stroke-width="1.3"/>
 <!-- window corners -->
 <path d="M0 779 Q0 788 9 788 H0 Z" fill="#222"/>
 <path d="M1600 778 Q1600 788 1590 788 H1600 Z" fill="#222"/>
</svg>


</body></html>
